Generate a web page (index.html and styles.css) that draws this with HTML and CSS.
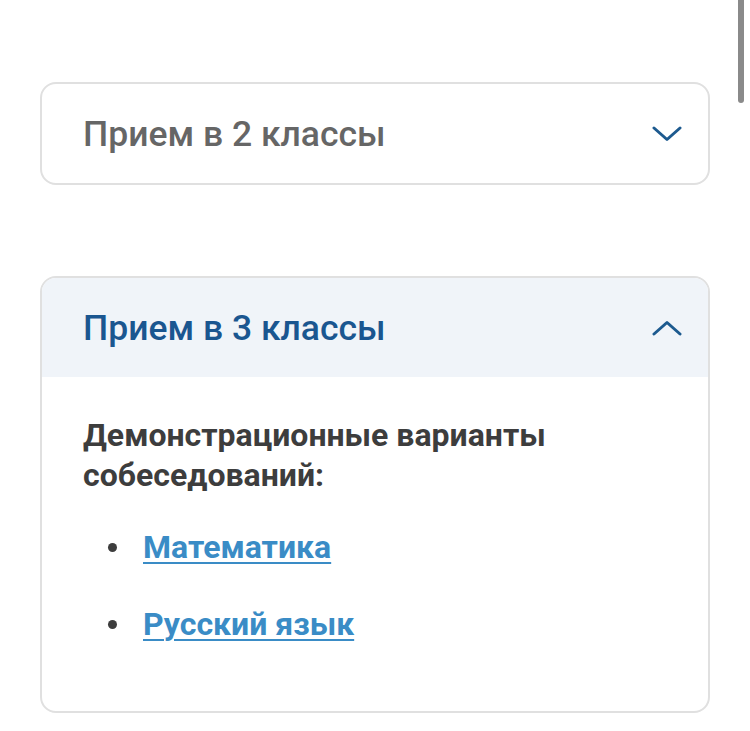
FILE: index.html
```html
<!DOCTYPE html>
<html lang="ru">
<head>
<meta charset="utf-8">
<link rel="stylesheet" href="styles.css">
</head>
<body>
<div class="scrollbar"></div>
<main class="page">
  <section class="acc">
    <div class="acc-head">
      <span class="acc-title">Прием в 2 классы</span>
      <svg class="chev" width="30" height="16" viewBox="0 0 30 16"><path d="M2 2 L15 13.5 L28 2" fill="none" stroke="#1d5a8f" stroke-width="3" stroke-linecap="round" stroke-linejoin="round"/></svg>
    </div>
  </section>
  <section class="acc open">
    <div class="acc-head">
      <span class="acc-title">Прием в 3 классы</span>
      <svg class="chev" width="30" height="16" viewBox="0 0 30 16"><path d="M2 14 L15 2.5 L28 14" fill="none" stroke="#1d5a8f" stroke-width="3" stroke-linecap="round" stroke-linejoin="round"/></svg>
    </div>
    <div class="acc-body">
      <p class="lead">Демонстрационные варианты собеседований:</p>
      <ul class="links">
        <li><a href="#">Математика</a></li>
        <li><a href="#">Русский язык</a></li>
      </ul>
    </div>
  </section>
</main>
</body>
</html>
```
FILE: styles.css
```css
html, body {
  margin: 0;
  padding: 0;
  background: #ffffff;
}
body {
  font-family: Roboto, "Noto Sans", sans-serif;
  overflow: hidden;
}
.scrollbar {
  position: fixed;
  top: 0;
  right: 6px;
  width: 6px;
  height: 103px;
  background: #8a8a8a;
  border-radius: 0 0 3px 3px;
}
.page {
  padding: 82px 0 0 40px;
  width: 670px;
  display: flex;
  flex-direction: column;
  gap: 91px;
}
.acc {
  border: 2px solid #e0e0e0;
  border-radius: 16px;
  overflow: hidden;
  background: #fff;
}
.acc-head {
  height: 99px;
  display: flex;
  align-items: center;
  justify-content: space-between;
  padding: 0 26px 0 41px;
}
.open .acc-head {
  background: #f0f4f9;
}
.acc-title {
  font-size: 35.5px;
  font-weight: 500;
  color: #666666;
}
.open .acc-title {
  color: #1a5690;
}
.chev {
  display: block;
}
.acc-body {
  padding: 38px 41px 67px;
}
.lead {
  margin: 0;
  font-size: 32px;
  font-weight: 700;
  line-height: 40px;
  color: #3d3d3d;
}
.links {
  margin: 32px 0 0;
  padding: 0 0 0 60px;
  list-style: none;
}
.links li {
  position: relative;
  font-size: 32px;
  line-height: 40px;
  margin-bottom: 37px;
}
.links li::before {
  content: "";
  position: absolute;
  left: -35px;
  top: 16px;
  width: 9px;
  height: 9px;
  border-radius: 50%;
  background: #3d3d3d;
}
.links li:last-child {
  margin-bottom: 0;
}
.links a {
  color: #3a8cc6;
  font-weight: 700;
  text-decoration: underline;
  text-decoration-thickness: 2px;
  text-underline-offset: 4px;
}
```
